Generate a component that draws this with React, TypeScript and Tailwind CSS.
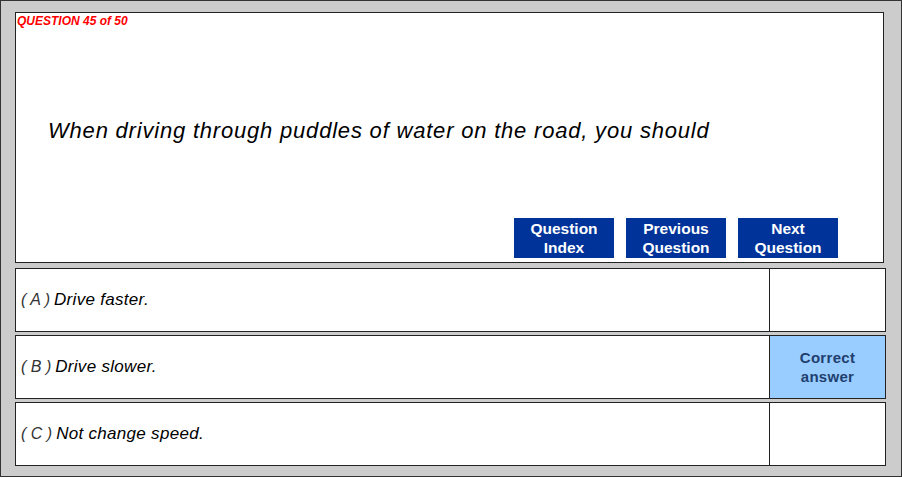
const answers = [
  { letter: 'A', text: 'Drive faster.', correct: false },
  { letter: 'B', text: 'Drive slower.', correct: true },
  { letter: 'C', text: 'Not change speed.', correct: false },
];

const navButtons = [
  ['Question', 'Index'],
  ['Previous', 'Question'],
  ['Next', 'Question'],
];

export default function App() {
  return (
    <div className="w-[902px] h-[478px] bg-white font-['Liberation_Sans',Arial,sans-serif]">
      <div className="w-[902px] h-[477px] bg-[#cccccc] border border-[#333333] pl-[14px] pt-[11px]">
        {/* Question panel */}
        <div className="w-[869px] h-[251px] bg-white border border-[#222222] flex flex-col">
          <div className="pl-[1px] pt-[1px] text-[12px] leading-[14px] font-bold italic text-[#ff0000]">
            QUESTION 45 of 50
          </div>
          <div className="pl-[32px] pt-[90px] text-[22px] leading-[26px] italic text-black tracking-[0.8px]">
            When driving through puddles of water on the road, you should
          </div>
          <div className="flex gap-[12px] pl-[498px] pt-[74px]">
            {navButtons.map(([a, b]) => (
              <div
                key={a + b}
                className="w-[100px] h-[40px] bg-[#003399] text-white font-bold text-[15.5px] leading-[19px] flex flex-col items-center justify-center"
              >
                <span>{a}</span>
                <span>{b}</span>
              </div>
            ))}
          </div>
        </div>

        {/* Answers */}
        <div className="flex flex-col gap-[3px] mt-[5px]">
          {answers.map(ans => (
            <div key={ans.letter} className="w-[871px] h-[64px] bg-white border border-[#222222] flex">
              <div className="flex-1 flex items-center pl-[5px] italic text-black">
                <span className="text-[16px] font-light text-[#333333]">( {ans.letter} )</span>
                <span className="ml-[4px] text-[17px] tracking-[0.3px]">{ans.text}</span>
              </div>
              <div
                className={
                  ans.correct
                    ? 'w-[116px] border-l border-[#222222] bg-[#99ccff] flex flex-col items-center justify-center text-[#1f3f6f] font-bold text-[15px] leading-[19px] tracking-[0.3px]'
                    : 'w-[116px] border-l border-[#222222] bg-white'
                }
              >
                {ans.correct && (
                  <>
                    <span>Correct</span>
                    <span>answer</span>
                  </>
                )}
              </div>
            </div>
          ))}
        </div>
      </div>
    </div>
  );
}
